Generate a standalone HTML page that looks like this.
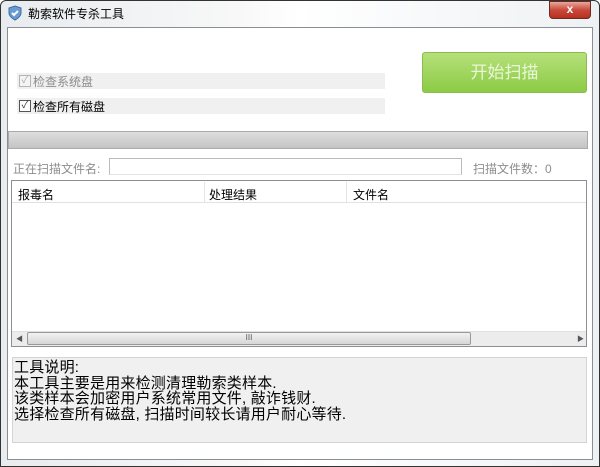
<!DOCTYPE html><html><head><meta charset="utf-8"><style>
*{margin:0;padding:0;box-sizing:border-box}
body{width:600px;height:467px;overflow:hidden;background:#fff;font-family:"Liberation Sans","Noto Sans CJK SC",sans-serif;font-size:12px;position:relative}
.a{position:absolute}
</style></head><body>
<div class="a" style="left:0;top:0;width:600px;height:467px;border:1px solid #333;border-radius:6px 6px 0 0;background:linear-gradient(90deg,#e8ecef,#f8f8f8 40%,#fff 50%,#eef1f3)"></div>
<svg class="a" style="left:7px;top:5px" width="16" height="16" viewBox="0 0 16 16"><path d="M8 1L14 3V8C14 12 8 15 8 15C8 15 2 12 2 8V3Z" fill="#6a9bd0" stroke="#3d6ea8"/><path d="M5 8L7 10L11 6" stroke="#fff" stroke-width="2" fill="none"/></svg>
<div class="a" style="left:28px;top:5px;font-size:12px;color:#000">勒索软件专杀工具</div>
<div class="a" style="left:549px;top:1px;width:42px;height:18px;border:1px solid #6b2a22;border-radius:0 0 4px 4px;background:linear-gradient(#e9a89b,#c8493a 50%,#b8301f);color:#fff;font-weight:bold;font-size:12px;text-align:center;line-height:15px">x</div>
<div class="a" style="left:7px;top:27px;width:586px;height:433px;border:1px solid #8a8f95;background:#fff"></div>
<div class="a" style="left:17px;top:73px;width:368px;height:16px;background:#f0f0f0"></div>
<div class="a" style="left:17px;top:98px;width:368px;height:16px;background:#f0f0f0"></div>
<div class="a" style="left:19px;top:75px;width:12px;height:12px;border:1px solid #b5b5b5;background:#f4f4f4;color:#aaa;font-size:10px;line-height:10px;text-align:center">✓</div>
<div class="a" style="left:33px;top:73px;color:#8d8d8d">检查系统盘</div>
<div class="a" style="left:19px;top:100px;width:12px;height:12px;border:1px solid #555;background:#fff;color:#334;font-size:10px;line-height:10px;text-align:center">✓</div>
<div class="a" style="left:33px;top:98px;color:#000">检查所有磁盘</div>
<div class="a" style="left:422px;top:52px;width:165px;height:41px;border:1px solid #8dbb52;border-radius:3px;background:linear-gradient(#b5e07a,#8ccb45);color:#eaf6d9;font-size:17px;text-align:center;line-height:39px">开始扫描</div>
<div class="a" style="left:8px;top:131px;width:580px;height:18px;border:1px solid #aaa;background:linear-gradient(#dedede,#c4c4c4)"></div>
<div class="a" style="left:13px;top:160px;color:#8d8d8d">正在扫描文件名:</div>
<div class="a" style="left:109px;top:158px;width:353px;height:17px;border:1px solid #bbb;border-bottom-color:#e3e3e3"></div>
<div class="a" style="left:473px;top:160px;color:#8d8d8d">扫描文件数：0</div>
<div class="a" style="left:11px;top:180px;width:576px;height:167px;border:1px solid #8a8f95;background:#fff"></div>
<div class="a" style="left:12px;top:181px;width:574px;height:22px;border-bottom:1px solid #e2e2e2;background:#fff"></div>
<div class="a" style="left:204px;top:182px;width:1px;height:20px;background:#e4e4e4"></div>
<div class="a" style="left:346px;top:182px;width:1px;height:20px;background:#e4e4e4"></div>
<div class="a" style="left:18px;top:186px">报毒名</div>
<div class="a" style="left:209px;top:186px">处理结果</div>
<div class="a" style="left:353px;top:186px">文件名</div>
<div class="a" style="left:12px;top:331px;width:574px;height:15px;background:#ececec;border-top:1px solid #e0e0e0"></div>
<div class="a" style="left:16px;top:334px;font-size:7px;color:#555">◀</div>
<div class="a" style="left:577px;top:334px;font-size:7px;color:#555">▶</div>
<div class="a" style="left:27px;top:332px;width:444px;height:13px;border:1px solid #999;border-radius:2px;background:linear-gradient(#f2f2f2,#d6d6d6);font-size:8px;text-align:center;line-height:10px;color:#555">III</div>
<div class="a" style="left:12px;top:357px;width:575px;height:86px;border:1px solid #d4d4d4;background:#f0f0f0"></div>
<div class="a" style="left:14px;top:360px;font-size:15px;line-height:15.5px;color:#000;letter-spacing:0.2px">工具说明:<br>本工具主要是用来检测清理勒索类样本.<br>该类样本会加密用户系统常用文件, 敲诈钱财.<br>选择检查所有磁盘, 扫描时间较长请用户耐心等待.</div>
</body></html>
